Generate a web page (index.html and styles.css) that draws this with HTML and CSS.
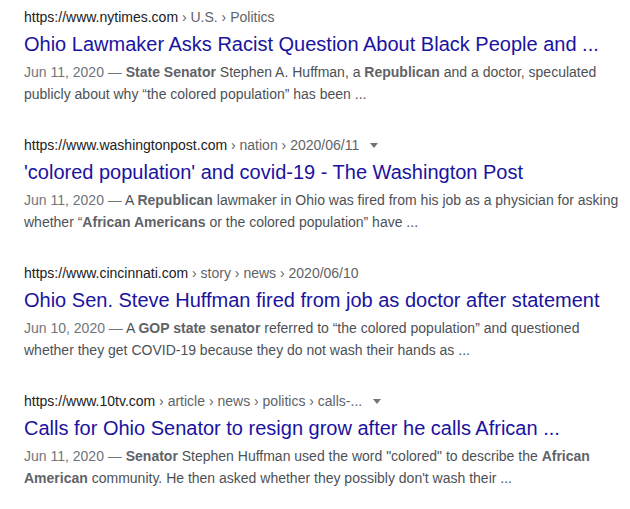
FILE: index.html
```html
<!DOCTYPE html>
<html>
<head>
<meta charset="utf-8">
<link rel="stylesheet" href="styles.css">
</head>
<body>
<div class="results">
  <div class="result">
    <div class="url"><span class="host">https://www.nytimes.com</span><span class="crumbs"> › U.S. › Politics</span></div>
    <div class="title">Ohio Lawmaker Asks Racist Question About Black People and ...</div>
    <div class="snippet"><span class="date">Jun 11, 2020 — </span><b>State Senator</b> Stephen A. Huffman, a <b>Republican</b> and a doctor, speculated<br>publicly about why “the colored population” has been ...</div>
  </div>
  <div class="result">
    <div class="url"><span class="host">https://www.washingtonpost.com</span><span class="crumbs"> › nation › 2020/06/11</span><span class="arrow"></span></div>
    <div class="title">'colored population' and covid-19 - The Washington Post</div>
    <div class="snippet"><span class="date">Jun 11, 2020 — </span>A <b>Republican</b> lawmaker in Ohio was fired from his job as a physician for asking<br>whether “<b>African Americans</b> or the colored population” have ...</div>
  </div>
  <div class="result">
    <div class="url"><span class="host">https://www.cincinnati.com</span><span class="crumbs"> › story › news › 2020/06/10</span></div>
    <div class="title">Ohio Sen. Steve Huffman fired from job as doctor after statement</div>
    <div class="snippet"><span class="date">Jun 10, 2020 — </span>A <b>GOP state senator</b> referred to “the colored population” and questioned<br>whether they get COVID-19 because they do not wash their hands as ...</div>
  </div>
  <div class="result">
    <div class="url"><span class="host">https://www.10tv.com</span><span class="crumbs"> › article › news › politics › calls-...</span><span class="arrow"></span></div>
    <div class="title">Calls for Ohio Senator to resign grow after he calls African ...</div>
    <div class="snippet"><span class="date">Jun 11, 2020 — </span><b>Senator</b> Stephen Huffman used the word "colored" to describe the <b>African</b><br><b>American</b> community. He then asked whether they possibly don't wash their ...</div>
  </div>
</div>
</body>
</html>
```

FILE: styles.css
```css
html, body {
  margin: 0;
  padding: 0;
  background: #ffffff;
}
body {
  font-family: "Liberation Sans", Arial, sans-serif;
}
.results {
  padding: 7px 0 0 24px;
  width: 600px;
}
.result {
  margin-bottom: 30px;
}
.url {
  font-size: 14px;
  line-height: 20px;
  white-space: nowrap;
  display: flex;
  align-items: center;
}
.host {
  color: #202124;
}
.crumbs {
  color: #5f6368;
  white-space: pre;
}
.arrow {
  width: 0;
  height: 0;
  margin-left: 11px;
  margin-top: 1px;
  border-style: solid;
  border-width: 5px 4px 0 4px;
  border-color: #70757a transparent transparent transparent;
}
.title {
  margin-top: 4px;
  font-size: 20px;
  line-height: 26px;
  color: #1a13a0;
  white-space: nowrap;
}
.snippet {
  margin-top: 4px;
  font-size: 14px;
  line-height: 22px;
  color: #4d5156;
  white-space: nowrap;
}
.snippet b {
  color: #5f6368;
  font-weight: bold;
}
.date {
  color: #70757a;
}
```
